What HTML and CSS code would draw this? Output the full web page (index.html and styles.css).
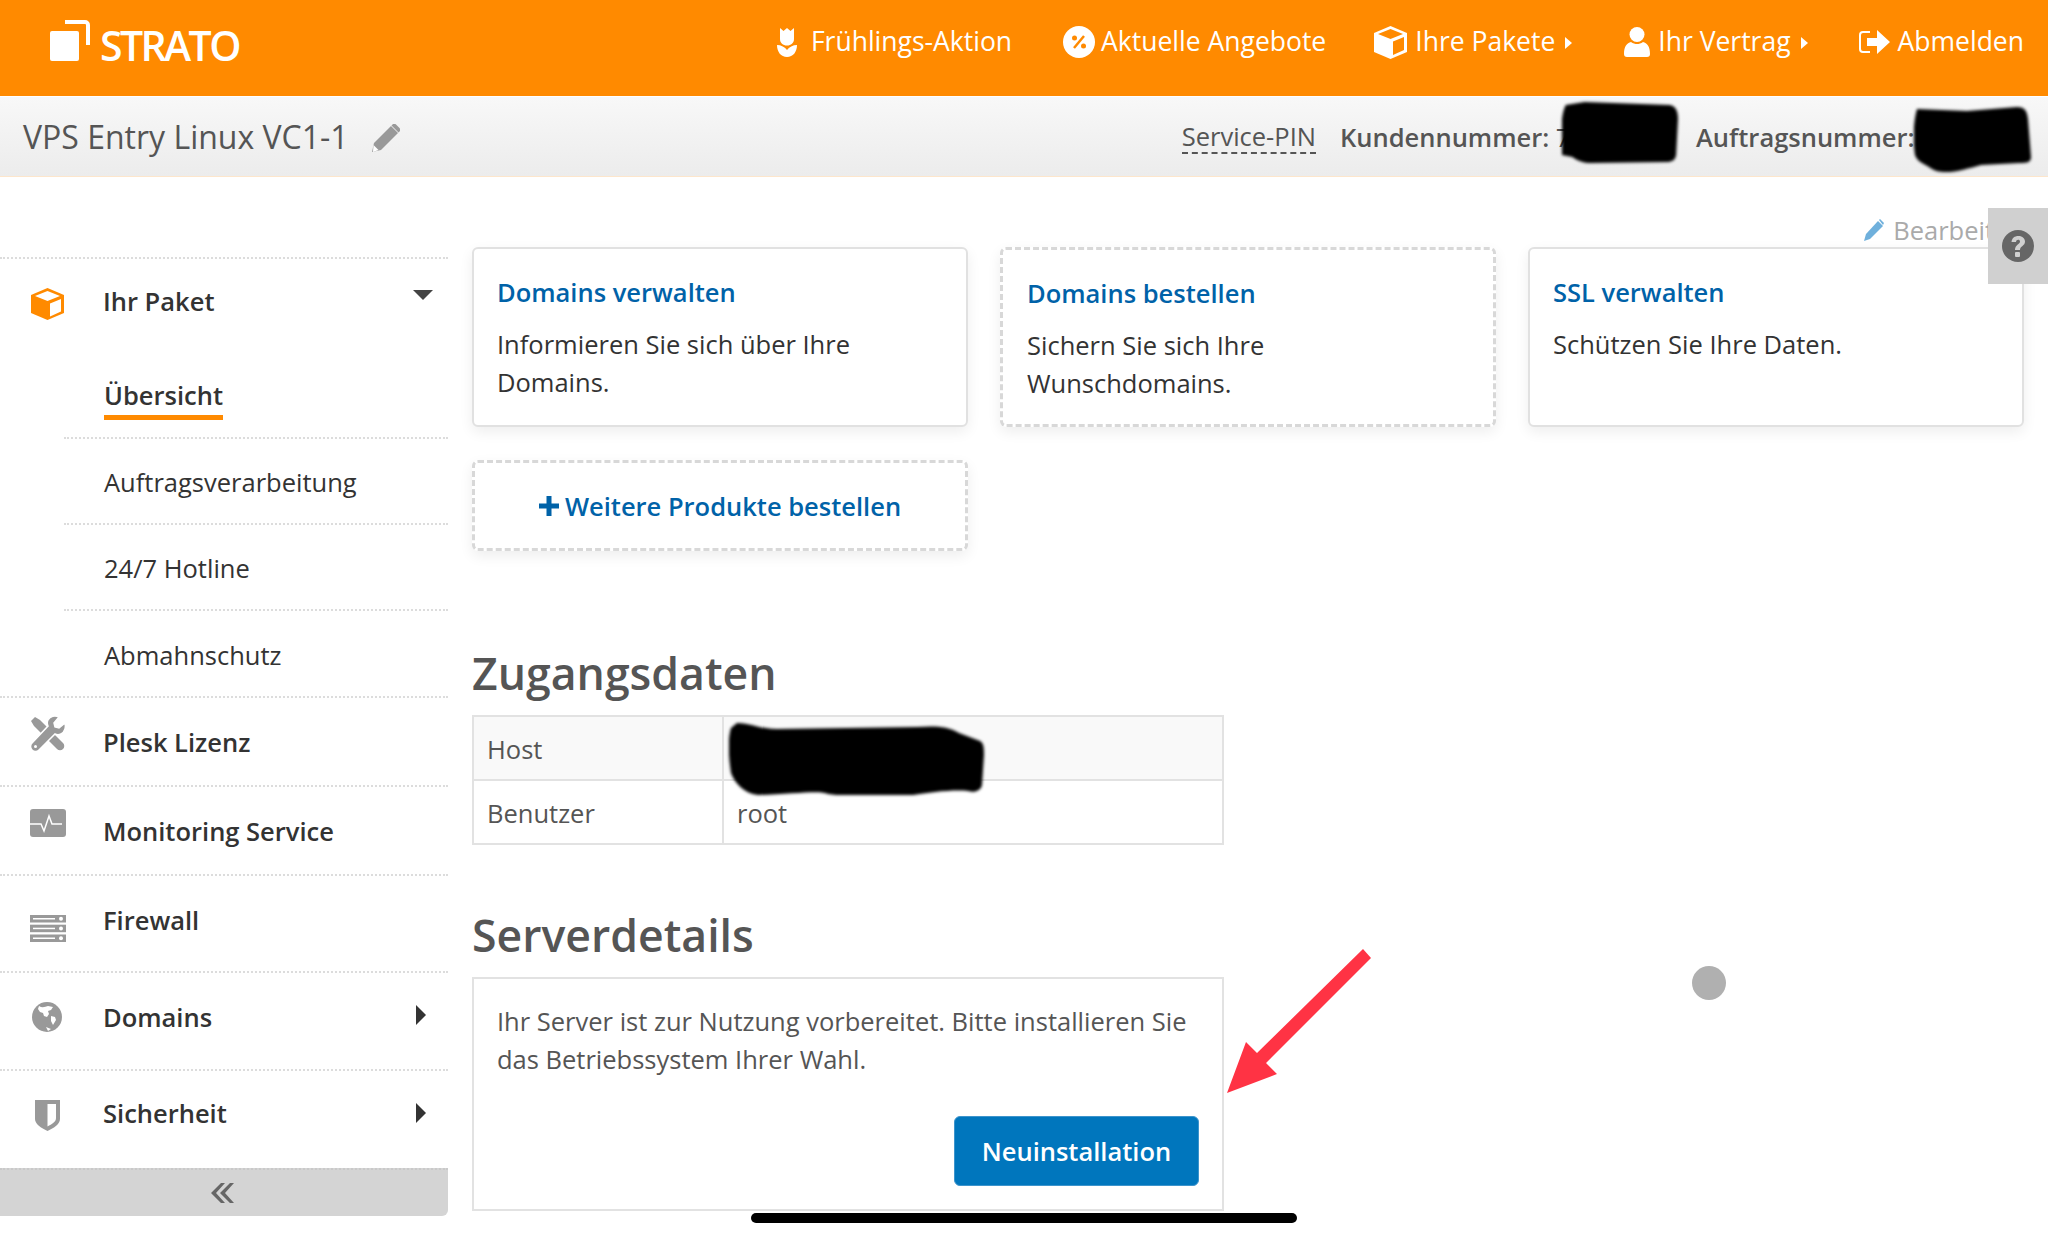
FILE: index.html
```html
<!DOCTYPE html>
<html lang="de">
<head>
<meta charset="utf-8">
<title>STRATO</title>
<link rel="stylesheet" href="styles.css">
</head>
<body>
<header class="topbar">
  <a class="logo">
    <svg class="logo-mark" viewBox="0 0 40 41"><rect x="0" y="11" width="29" height="30" rx="2" fill="#fff"/><path d="M15 2H35a3 3 0 0 1 3 3V25" fill="none" stroke="#fff" stroke-width="4"/></svg>
    <span class="logo-text">STRATO</span>
  </a>
  <nav class="topnav">
    <a class="nav-item nav-spring"><svg class="ic-tulip" viewBox="0 0 20 29"><path d="M3 0l3.500 3L10 0l3.500 3L17 0v11c0 4-3 6.500-7 6.500S3 15 3 11z" fill="#fff"/><path d="M0 17c4 0 8 2 10 5 2-3 6-5 10-5 0 7-4 12-10 12S0 24 0 17z" fill="#fff"/></svg>Frühlings-Aktion</a>
    <a class="nav-item nav-offer"><svg class="ic-percent" viewBox="0 0 32 32"><ellipse cx="16" cy="16" rx="16" ry="16" fill="#fff"/><path d="M21 10L11 22" stroke="#ff8a00" stroke-width="2.500"/><circle cx="11.500" cy="12" r="2.500" fill="#ff8a00"/><circle cx="20.500" cy="20" r="2.500" fill="#ff8a00"/></svg>Aktuelle Angebote</a>
    <a class="nav-item nav-pack"><svg class="ic-box" viewBox="0 0 33 33"><path d="M16.500 0L33 7v19l-16.500 7L0 26V7z" fill="#fff"/><path d="M16.500 3L29 8l-12.500 5L4 8z" fill="#ff8a00"/><path d="M19 15.500L30 11v13l-11 5z" fill="#ff8a00"/></svg>Ihre Pakete<i class="tri"></i></a>
    <a class="nav-item nav-contract"><svg class="ic-user" viewBox="0 0 26 30"><circle cx="13" cy="7.500" r="7.500" fill="#fff"/><path d="M0 27c0-8 3-11 7-12 2 1.500 4 2 6 2s4-.5 6-2c4 1 7 4 7 12 0 2-1 3-3 3H3c-2 0-3-1-3-3z" fill="#fff"/></svg>Ihr Vertrag<i class="tri"></i></a>
    <a class="nav-item nav-out"><svg class="ic-out" viewBox="0 0 32 24"><path d="M11 2H4a3 3 0 0 0-3 3v14a3 3 0 0 0 3 3h7" fill="none" stroke="#fff" stroke-width="2"/><path d="M8 8h10V0l13 12-13 12v-8H8z" fill="#fff"/></svg>Abmelden</a>
  </nav>
</header>

<section class="subbar">
  <div class="product">
    <span class="product-name">VPS Entry Linux VC1-1</span>
    <svg class="ic-pencil" viewBox="0 0 28 28"><path d="M0 28l2-9L19 2l7 7L9 26z" fill="#999"/><path d="M20.500.5a2.500 2.500 0 0 1 3.500 0l3.500 3.500a2.500 2.500 0 0 1 0 3.500L26.500 8.500 19.500 1.500z" fill="#999"/><path d="M1.500 21l5 5-5.500 2z" fill="#fff"/></svg>
  </div>
  <div class="meta">
    <span class="pin">Service-PIN</span>
    <span class="meta-customer"><b>Kundennummer:</b> <span class="meta-value">7</span></span>
    <span class="meta-order"><b>Auftragsnummer:</b> <span class="meta-value">8</span></span>
  </div>
</section>

<div class="shell">
  <aside class="sidebar">
    <div class="side-row row-paket">
      <svg class="side-ic ic-cube" viewBox="0 0 33 32"><path d="M16.500 0L33 7v18l-16.500 7L0 25V7z" fill="#ff8a00"/><path d="M16.500 3L29 8l-12.500 5L4 8z" fill="#fff"/><path d="M19 15.500L30 11v12.500l-11 5z" fill="#fff"/></svg>
      <span class="side-label">Ihr Paket</span>
      <i class="caret-down"></i>
    </div>
    <ul class="subnav">
      <li class="sub-item sub-active"><span>Übersicht</span></li>
      <li class="sub-item">Auftragsverarbeitung</li>
      <li class="sub-item">24/7 Hotline</li>
      <li class="sub-item sub-last">Abmahnschutz</li>
    </ul>
    <div class="side-row row-plesk">
      <svg class="side-ic ic-tools" viewBox="0 0 36 36"><path d="M1 5l4-4 5 3 10 10L33 27a4 4 0 0 1-6 6L14 20 4 10z" fill="#999"/><path d="M35 7l-6 5-4-1-1-4 5-6c-4-2-9-1-11 3-1 2-1 4 0 6L2 27a4 4 0 0 0 7 7l16-16c2 1 4 1 6 0 4-2 5-7 4-11z" fill="#999" stroke="#fff" stroke-width="1.500"/><circle cx="5.500" cy="30.500" r="1.500" fill="#fff"/></svg>
      <span class="side-label">Plesk Lizenz</span>
    </div>
    <div class="side-row row-monitor">
      <svg class="side-ic ic-monitor" viewBox="0 0 36 28"><rect width="36" height="28" rx="3" fill="#999"/><path d="M0 15H11l3 7 5-15 3 8H32" fill="none" stroke="#fff" stroke-width="1.500"/></svg>
      <span class="side-label">Monitoring Service</span>
    </div>
    <div class="side-row row-firewall">
      <svg class="side-ic ic-firewall" viewBox="0 0 36 27"><g fill="#999"><rect width="36" height="7.500"/><rect y="9.700" width="36" height="7.500"/><rect y="19.500" width="36" height="7.500"/></g><g fill="#fff"><rect x="3" y="3" width="22" height="1.500"/><rect x="3" y="12.700" width="22" height="1.500"/><rect x="3" y="22.500" width="22" height="1.500"/><circle cx="31" cy="3.700" r="2"/><circle cx="31" cy="13.500" r="2"/><circle cx="31" cy="23.200" r="2"/></g></svg>
      <span class="side-label">Firewall</span>
    </div>
    <div class="side-row row-domains">
      <svg class="side-ic ic-globe" viewBox="0 0 30 30"><circle cx="15" cy="15" r="15" fill="#999"/><path d="M7 4c3 2 6 1 9 0l5 1-2 3-3 1 1 3-2 3-3-1-1-3-3-1-2-3zM19 14l4 1 1 3-3 5-2-4zM14 25l5 2-3 2z" fill="#fff"/></svg>
      <span class="side-label">Domains</span>
      <i class="caret-right"></i>
    </div>
    <div class="side-row row-security">
      <svg class="side-ic ic-shield" viewBox="0 0 25 31"><path d="M0 0H25V19c0 5-6 9-12.500 12C6 28 0 24 0 19z" fill="#999"/><path d="M12.500 4H21V18c0 4-4 6-8.500 8.500z" fill="#fff"/></svg>
      <span class="side-label">Sicherheit</span>
      <i class="caret-right"></i>
    </div>
    <div class="collapse">
      <svg class="ic-collapse" viewBox="0 0 23 20"><path d="M10 0L0 10l10 10h4L5 10 14 0zM19 0L9 10l10 10h4l-9-10L23 0z" fill="#666"/></svg>
    </div>
  </aside>

  <main class="content">
    <div class="toolbar">
      <a class="edit"><svg class="ic-edit" viewBox="0 0 20 22"><path d="M0 22l2-7L14 2l5 5L6 20z" fill="#6fb0dc"/><path d="M15 1l1-1 4 4-1 2z" fill="#6fb0dc"/></svg>Bearbeiten</a>
    </div>
    <div class="cards">
      <article class="card"><h3 class="card-title">Domains verwalten</h3><p class="card-text">Informieren Sie sich über Ihre Domains.</p></article>
      <article class="card card-dashed"><h3 class="card-title">Domains bestellen</h3><p class="card-text">Sichern Sie sich Ihre Wunschdomains.</p></article>
      <article class="card"><h3 class="card-title">SSL verwalten</h3><p class="card-text">Schützen Sie Ihre Daten.</p></article>
      <a class="card card-dashed card-add"><svg class="ic-plus" viewBox="0 0 20 20"><path d="M7.500 0h5v7.500H20v5h-7.500V20h-5v-7.500H0v-5h7.500z" fill="#0062a8"/></svg>Weitere Produkte bestellen</a>
    </div>

    <h2 class="section-title title-access">Zugangsdaten</h2>
    <table class="data">
      <tr class="row-odd"><td class="col-key">Host</td><td class="col-val"></td></tr>
      <tr><td class="col-key">Benutzer</td><td class="col-val">root</td></tr>
    </table>

    <h2 class="section-title title-server">Serverdetails</h2>
    <div class="details">
      <p class="details-text">Ihr Server ist zur Nutzung vorbereitet. Bitte installieren Sie das Betriebssystem Ihrer Wahl.</p>
      <div class="details-actions"><button class="btn">Neuinstallation</button></div>
    </div>
  </main>
</div>

<div class="help"><svg class="ic-help" viewBox="0 0 32 32"><circle cx="16" cy="16" r="16" fill="#666"/><path d="M9.500 12c.5-4 3-6 7-6s6.500 2.500 6.500 5.500c0 4.500-5 4.500-5 8.500h-5c0-5.500 5-5.500 5-8.500 0-1.200-.8-1.800-1.800-1.800-1.300 0-2 .8-2.200 2.300z" fill="#d0d0d0"/><rect x="13" y="22" width="5" height="5" rx="1" fill="#d0d0d0"/></svg></div>

<svg class="redact redact-a" viewBox="0 0 123 61" preserveAspectRatio="none"><path d="M4 3l20-3 90 3c6 1 9 5 9 14l-2 36c-1 5-4 7-10 7l-80 1c-8 0-14-2-20-6l-11-2c-2-10-2-40 4-50z" fill="#000"/></svg>
<svg class="redact redact-b" viewBox="0 0 117 66" preserveAspectRatio="none"><path d="M3 2l50 2 50-4c8 0 10 4 11 12l3 38c0 5-3 6-12 6l-38 2c-18 5-40 12-52 2C8 56 3 54 1 48c-2-14-2-32 2-46z" fill="#000"/></svg>
<svg class="redact redact-c" viewBox="0 0 255 72" preserveAspectRatio="none"><path d="M8 0c14 0 22 6 40 6l140-2c18-1 30-1 42 6l21 8c4 2 4 8 4 14l-2 30c-1 6-8 8-14 6-14-2-46 2-60 5-20 2-50 2-80-2-8-4-32 0-70 1C14 70 6 60 2 50-1 30-1 15 2 5z" fill="#000"/></svg>
<svg class="arrow" viewBox="0 0 144 144"><path d="M136 0l8 9L39 114l11 11-50 19 19-51 11 11z" fill="#ff3344"/></svg>
<div class="dot"></div>
<div class="homebar"></div>
</body>
</html>
```

FILE: styles.css
```css
* { box-sizing: border-box; }
html, body { margin: 0; padding: 0; }
body {
  width: 2048px;
  height: 1236px;
  overflow: hidden;
  position: relative;
  background: #fff;
  font-family: "Open Sans", "Liberation Sans", sans-serif;
  font-size: 25.5px;
  color: #333;
}
a { color: inherit; text-decoration: none; }

/* top bar */
.topbar {
  height: 96px;
  background: #ff8a00;
  color: #fff;
  display: flex;
  justify-content: space-between;
}
.logo { display: flex; align-items: flex-start; padding: 20px 0 0 50px; }
.logo-mark { width: 40px; height: 41px; }
.logo-text {
  margin: 0 0 0 10px;
  font-size: 41px;
  line-height: 50px;
  font-weight: 600;
  letter-spacing: -2.6px;
}
.topnav { display: flex; align-items: center; padding-right: 24px; height: 82px; }
.nav-item { display: flex; align-items: center; font-size: 26.5px; font-weight: 500; white-space: nowrap; }
.nav-spring { margin-right: 51px; }
.nav-offer { margin-right: 48px; }
.nav-pack { margin-right: 52px; }
.nav-contract { margin-right: 51px; }
.ic-tulip { width: 20px; height: 29px; margin: 3px 14px 0 0; }
.ic-percent { width: 32px; height: 32px; margin: 1px 6px 0 0; }
.ic-box { width: 33px; height: 33px; margin: 2px 8px 0 0; }
.ic-user { width: 26px; height: 30px; margin: 1px 8px 0 0; }
.ic-out { width: 32px; height: 24px; margin: 1px 7px 0 0; }
.tri {
  width: 0; height: 0; margin: 3px 0 0 10px;
  border-left: 7px solid #fff;
  border-top: 6px solid transparent;
  border-bottom: 6px solid transparent;
}

/* sub bar */
.subbar {
  margin-top: 1px;
  height: 80px;
  background: linear-gradient(#f8f8f8, #ececec);
  border-bottom: 1px solid #fde6cc;
  display: flex;
  justify-content: space-between;
  align-items: center;
  padding: 0 0 0 23px;
  color: #555;
}
.product { display: flex; align-items: center; }
.product-name { font-size: 32px; line-height: 44px; }
.ic-pencil { width: 28px; height: 28px; margin: 2px 0 0 23px; }
.meta { display: flex; align-items: center; }
.pin { border-bottom: 2px dashed #555; line-height: 32px; margin-right: 24px; }
.meta b { font-weight: 600; }
.meta-value { color: #555; }
.meta-customer { width: 356px; }
.meta-order { width: 352px; }

/* layout */
.shell { display: flex; }
.sidebar { width: 448px; flex: none; padding-top: 80px; }
.content { flex: 1; padding: 0 24px; min-width: 0; }

/* sidebar */
.side-row {
  display: flex;
  align-items: center;
  border-bottom: 2px dotted #dcdcdc;
  position: relative;
  padding-left: 30px;
}
.side-label { position: absolute; left: 103px; font-weight: 600; color: #333; line-height: 36px; }
.side-ic { flex: none; }
.row-paket { height: 92px; border-top: 2px dotted #dcdcdc; border-bottom: 0; }
.row-plesk { height: 89px; }
.row-monitor { height: 89px; }
.row-firewall { height: 97px; }
.row-domains { height: 98px; }
.row-security { height: 97px; border-bottom: 0; }
.ic-cube { width: 33px; height: 32px; margin-left: 1px; }
.ic-tools { width: 36px; height: 36px; margin-bottom: 16px; }
.ic-monitor { width: 36px; height: 28px; margin-bottom: 15px; }
.ic-firewall { width: 36px; height: 27px; margin-top: 10px; }
.ic-globe { width: 30px; height: 30px; margin: 0 0 8px 2px; }
.ic-shield { width: 25px; height: 31px; margin: 0 0 8px 5px; }
.row-paket .side-label { margin-top: -6px; }
.row-firewall .side-label { margin-top: -7px; }
.row-domains .side-label { margin-top: -8px; }
.row-security .side-label { margin-top: -13px; }
.caret-down {
  position: absolute; left: 413px; top: 31px;
  border-top: 10px solid #444;
  border-left: 10px solid transparent;
  border-right: 10px solid transparent;
}
.caret-right {
  position: absolute; left: 416px; top: 32px;
  border-left: 10px solid #333;
  border-top: 10px solid transparent;
  border-bottom: 10px solid transparent;
}
.subnav { list-style: none; margin: 0; padding: 0; }
.sub-item {
  height: 86px;
  margin-left: 64px;
  padding-left: 40px;
  line-height: 87px;
  border-bottom: 2px dotted #dcdcdc;
  color: #333;
}
.sub-active { height: 90px; line-height: 1; padding-top: 28px; }
.sub-active span {
  display: inline-block;
  font-weight: 600;
  line-height: 36px;
  padding-bottom: 2px;
  border-bottom: 5px solid #ff8a00;
}
.sub-last { height: 87px; margin-left: 0; padding-left: 104px; line-height: 88px; }
.collapse {
  height: 48px;
  border-top: 2px dotted #c9c9c9;
  background: #d4d4d4;
  border-radius: 0 0 6px 0;
  display: flex;
  justify-content: center;
  align-items: center;
}
.ic-collapse { width: 25px; height: 20px; margin-right: 3px; }

/* main */
.toolbar { height: 70px; display: flex; justify-content: flex-end; align-items: flex-start; padding-top: 35px; }
.edit { display: flex; align-items: center; color: #aaa; line-height: 36px; }
.ic-edit { width: 20px; height: 22px; margin-right: 9px; }
.cards { display: grid; grid-template-columns: repeat(3, 496px); gap: 33px 32px; }
.card {
  height: 180px;
  padding: 25px 23px 0;
  border: 2px solid #e1e1e1;
  border-radius: 6px;
  background: #fff;
  box-shadow: 0 5px 14px rgba(0,0,0,.07);
}
.card-dashed { border: 3px dashed #d8d8d8; padding-left: 24px; }
.card-title { margin: 0; font-size: 25.5px; line-height: 36px; font-weight: 600; color: #0062a8; }
.card-text { margin: 16px 0 0; font-size: 25.5px; line-height: 37.5px; color: #333; }
.card-add {
  grid-column: 1;
  height: 91px;
  padding: 0;
  display: flex;
  justify-content: center;
  align-items: center;
  font-weight: 600;
  color: #0062a8;
}
.ic-plus { width: 20px; height: 20px; margin-right: 6px; }

.section-title { margin: 0; font-size: 44.6px; line-height: 60px; font-weight: 600; color: #555; }
.title-access { margin-top: 92px; }
.title-server { margin-top: 60px; }
.data { margin-top: 12px; width: 752px; border-collapse: collapse; border: 2px solid #e2e2e2; }
.data td { height: 64px; padding: 1px 13px 0; border: 2px solid #e2e2e2; color: #555; }
.col-key { width: 250px; }
.row-odd { background: #f9f9f9; }
.details { margin-top: 12px; width: 752px; height: 234px; padding: 24px 23px 0; border: 2px solid #e2e2e2; }
.details-text { margin: 0; line-height: 37.5px; color: #555; }
.details-actions { display: flex; justify-content: flex-end; margin-top: 38px; }
.btn {
  width: 245px;
  height: 70px;
  border: 1px solid #3d94cc;
  border-radius: 6px;
  background: #0076bd;
  color: #fff;
  font: inherit;
  font-weight: 600;
}

/* overlays */
.help {
  position: absolute; left: 1988px; top: 208px; width: 60px; height: 76px;
  background: #d0d0d0;
  display: flex; align-items: center; padding-left: 14px;
}
.ic-help { width: 32px; height: 32px; }
.redact { position: absolute; filter: blur(1.5px); }
.redact-a { left: 1562px; top: 102px; width: 116px; height: 61px; }
.redact-b { left: 1914px; top: 107px; width: 117px; height: 66px; }
.redact-c { left: 729px; top: 723px; width: 255px; height: 72px; }
.arrow { position: absolute; left: 1227px; top: 949px; width: 144px; height: 144px; }
.dot { position: absolute; left: 1692px; top: 966px; width: 34px; height: 34px; border-radius: 50%; background: #b0b0b0; }
.homebar { position: absolute; left: 751px; top: 1213px; width: 546px; height: 10px; border-radius: 5px; background: #000; }
```
